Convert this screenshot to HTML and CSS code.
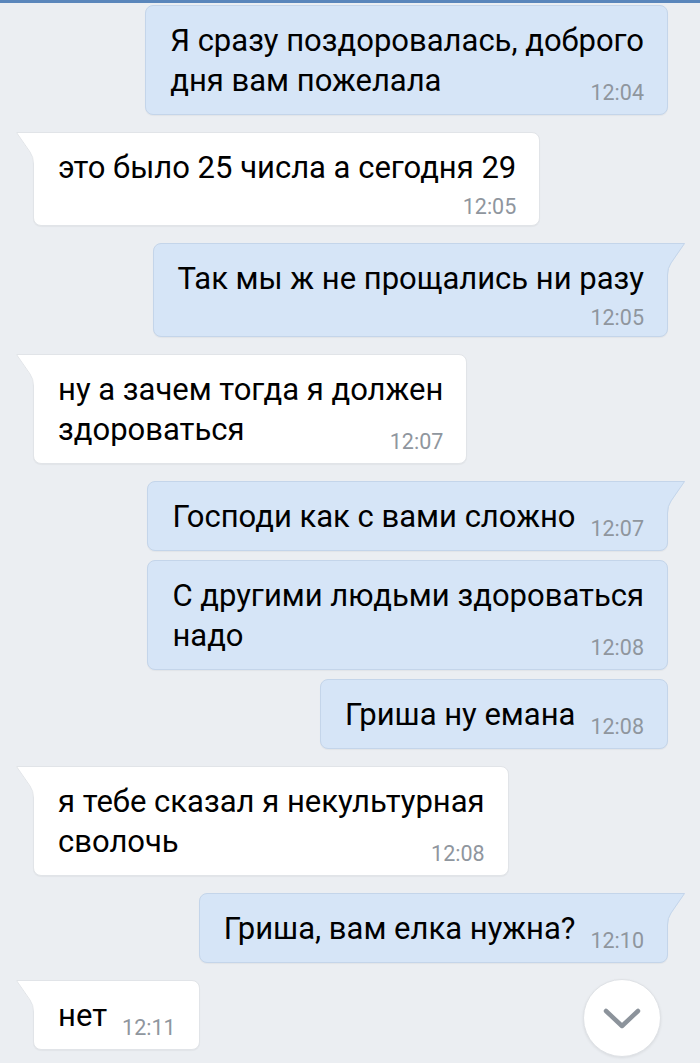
FILE: index.html
```html
<!DOCTYPE html>
<html lang="ru">
<head>
    <meta charset="UTF-8">
    <meta name="viewport" content="width=device-width, initial-scale=1.0">
    <title>Сообщения</title>
    <link rel="stylesheet" href="styles.css">
</head>
<body>

    <div class="topbar"></div>

    <div class="chat">
        <div class="msg out">
            <p class="text">Я сразу поздоровалась, доброго<br>дня вам пожелала<span class="time">12:04</span></p>
        </div>

        <div class="msg in first">
            <svg class="tail" viewBox="0 0 20 36"><path class="tail-fill" d="M0 0H19L5.5 20Q2 25 2 32V36H0Z"/><path class="tail-line" d="M0 0.5H18.5L5 20Q1.5 25 1.5 32V36"/></svg>
            <p class="text">это было 25 числа а сегодня 29<span class="time below">12:05</span></p>
        </div>

        <div class="msg out first">
            <svg class="tail" viewBox="0 0 20 36"><path class="tail-fill" d="M0 0H19L5.5 20Q2 25 2 32V36H0Z"/><path class="tail-line" d="M0 0.5H18.5L5 20Q1.5 25 1.5 32V36"/></svg>
            <p class="text">Так мы ж не прощались ни разу<span class="time below">12:05</span></p>
        </div>

        <div class="msg in first">
            <svg class="tail" viewBox="0 0 20 36"><path class="tail-fill" d="M0 0H19L5.5 20Q2 25 2 32V36H0Z"/><path class="tail-line" d="M0 0.5H18.5L5 20Q1.5 25 1.5 32V36"/></svg>
            <p class="text">ну а зачем тогда я должен<br>здороваться<span class="time">12:07</span></p>
        </div>

        <div class="msg out first">
            <svg class="tail" viewBox="0 0 20 36"><path class="tail-fill" d="M0 0H19L5.5 20Q2 25 2 32V36H0Z"/><path class="tail-line" d="M0 0.5H18.5L5 20Q1.5 25 1.5 32V36"/></svg>
            <p class="text">Господи как с вами сложно<span class="time">12:07</span></p>
        </div>

        <div class="msg out">
            <p class="text">С другими людьми здороваться<br>надо<span class="time">12:08</span></p>
        </div>

        <div class="msg out">
            <p class="text">Гриша ну емана<span class="time">12:08</span></p>
        </div>

        <div class="msg in first">
            <svg class="tail" viewBox="0 0 20 36"><path class="tail-fill" d="M0 0H19L5.5 20Q2 25 2 32V36H0Z"/><path class="tail-line" d="M0 0.5H18.5L5 20Q1.5 25 1.5 32V36"/></svg>
            <p class="text">я тебе сказал я некультурная<br>сволочь<span class="time">12:08</span></p>
        </div>

        <div class="msg out first">
            <svg class="tail" viewBox="0 0 20 36"><path class="tail-fill" d="M0 0H19L5.5 20Q2 25 2 32V36H0Z"/><path class="tail-line" d="M0 0.5H18.5L5 20Q1.5 25 1.5 32V36"/></svg>
            <p class="text">Гриша, вам елка нужна?<span class="time">12:10</span></p>
        </div>

        <div class="msg in first">
            <svg class="tail" viewBox="0 0 20 36"><path class="tail-fill" d="M0 0H19L5.5 20Q2 25 2 32V36H0Z"/><path class="tail-line" d="M0 0.5H18.5L5 20Q1.5 25 1.5 32V36"/></svg>
            <p class="text">нет<span class="time">12:11</span></p>
        </div>
    </div>

    <button class="scroll-down" aria-label="Вниз">
        <svg viewBox="0 0 40 24" width="40" height="24"><path d="M4 4L20 19L36 4" fill="none" stroke="#8c939b" stroke-width="4.5" stroke-linecap="round" stroke-linejoin="round"/></svg>
    </button>

</body>
</html>
```

FILE: styles.css
```css
body {
    margin: 0;
    font-family: Roboto, "Noto Sans", sans-serif;
    background-color: #ebeef2;
    color: #000;
    height: 1063px;
    overflow: hidden;
    position: relative;
}
.topbar {
    height: 3px;
    background-color: #5a86bb;
}
.chat {
    display: flex;
    flex-direction: column;
    padding: 2px 32px 0 33px;
}
.msg {
    position: relative;
    margin-top: 9px;
    padding: 15px 23px 13px 24px;
    border: 1px solid;
    border-radius: 8px;
    box-shadow: 0 1px 1px rgba(0, 0, 0, 0.04);
}
.msg:first-child {
    margin-top: 0;
}
.msg.first {
    margin-top: 17px;
}
.in {
    align-self: flex-start;
    background-color: #fff;
    border-color: #e1e4e8;
}
.out {
    align-self: flex-end;
    background-color: #d6e5f7;
    border-color: #c4d5ea;
}
.in.first {
    border-top-left-radius: 0;
}
.out.first {
    border-top-right-radius: 0;
}
.text {
    margin: 0;
    font-size: 31px;
    line-height: 40px;
    white-space: nowrap;
}
.time {
    float: right;
    margin: 21px 0 -6px 15px;
    font-size: 21.5px;
    line-height: 22px;
    color: #8f969e;
}
.time.below {
    float: none;
    display: block;
    text-align: right;
    margin: 8px 0 -6px 0;
}
.tail {
    position: absolute;
    top: -1px;
    width: 20px;
    height: 36px;
}
.out .tail {
    right: -19px;
}
.in .tail {
    left: -19px;
    transform: scaleX(-1);
}
.tail-line {
    fill: none;
    stroke-width: 1;
}
.in .tail-fill {
    fill: #fff;
}
.in .tail-line {
    stroke: #e1e4e8;
}
.out .tail-fill {
    fill: #d6e5f7;
}
.out .tail-line {
    stroke: #c4d5ea;
}
.scroll-down {
    position: absolute;
    left: 583px;
    top: 979px;
    width: 78px;
    height: 78px;
    padding: 0;
    border: 1px solid #dfe2e6;
    border-radius: 50%;
    background-color: #fff;
    box-shadow: 0 1px 3px rgba(0, 0, 0, 0.08);
    display: flex;
    align-items: center;
    justify-content: center;
}
.scroll-down svg {
    margin-top: 2px;
}
```
